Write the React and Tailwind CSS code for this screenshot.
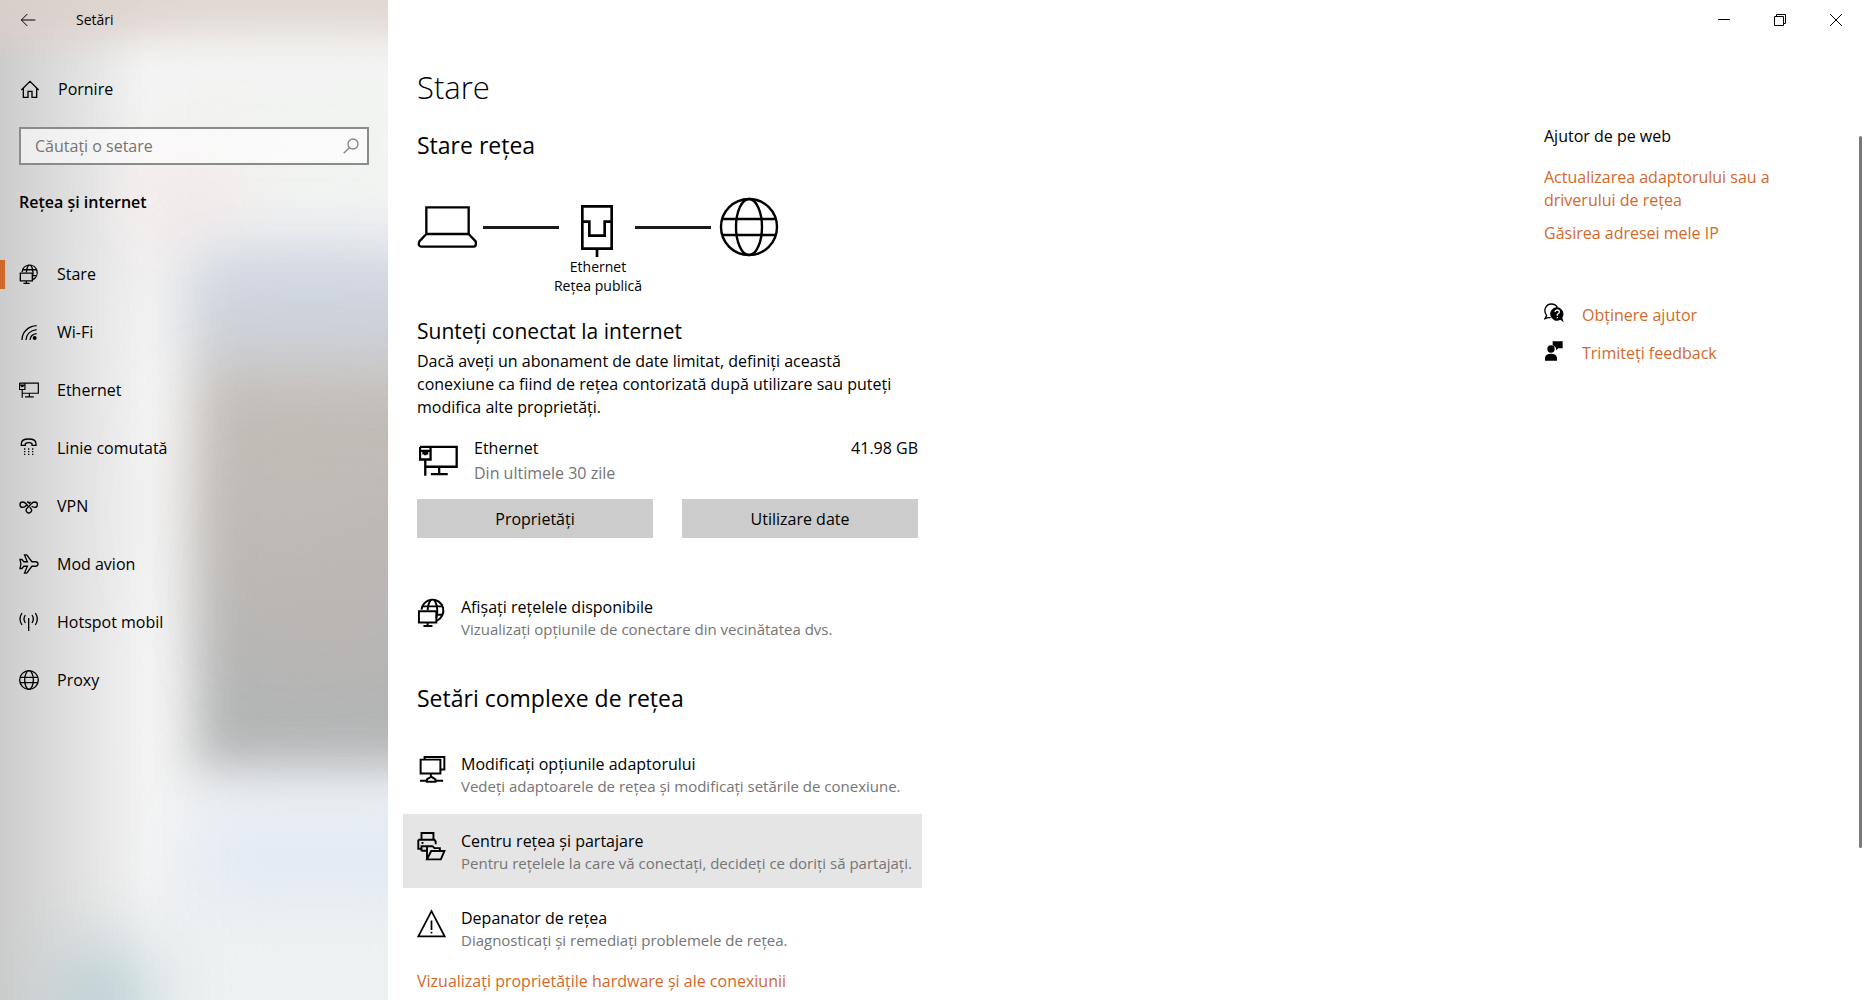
import React from "react";

function Icon({ box, className, stroke = 4, children }) {
  return (
    <svg
      viewBox={box}
      className={className}
      fill="none"
      stroke="currentColor"
      strokeWidth={stroke}
      aria-hidden="true"
    >
      {children}
    </svg>
  );
}

const NetworkStatusIcon = ({ className, stroke = 6 }) => (
  <Icon box="0 0 86 90" className={className} stroke={stroke}>
    <path d="M12 36A34 34 0 1 1 60 70" />
    <path d="M31 38Q32 16 42 4M50 4Q60 16 61 38Q61 54 58 62" />
    <path d="M15 26H77M60 52H77" />
    <path d="M4 41H58V76H4ZM31 76V87M18 87H46" />
  </Icon>
);

const WifiIcon = ({ className }) => (
  <Icon box="0 0 60 60" className={className} stroke={4}>
    <path d="M9 54C9 30 28 12 53 11M21 54C22 37 34 25 53 23M33 54C34 44 41 36 53 35" />
    <circle cx="47" cy="48" r="6" fill="currentColor" stroke="none" />
  </Icon>
);

const EthernetIcon = ({ className, stroke = 7 }) => (
  <Icon box="0 0 118 92" className={className} stroke={stroke}>
    <path d="M3 5H114V65H19M3 5V43H35V5M3 17H35M19 17V30M10 24H28M19 43V92M61 65V87M36 87H87" />
  </Icon>
);

const PhoneIcon = ({ className }) => (
  <Icon box="0 0 60 60" className={className} stroke={4}>
    <path d="M7 17C7 5 19 3 29 3S51 5 51 17V22H39V17C35 13 23 13 19 17V22H7Z" />
    <path d="M15 33H19M27 33H31M39 33H43M15 41H19M27 41H31M39 41H43M15 49H19M27 49H31M39 49H43" />
  </Icon>
);

const VpnIcon = ({ className }) => (
  <Icon box="0 0 60 60" className={className} stroke={4}>
    <path d="M22 28Q18 34 11 34A8 8 0 0 1 11 18Q17 18 22 24L27 31M24 18H27L31 22L35 18" />
    <path d="M38 31Q42 34 47 34A8 8 0 0 0 47 18Q41 18 36 24L24 37A8 8 0 1 0 36 38L32 33" />
  </Icon>
);

const PlaneIcon = ({ className }) => (
  <Icon box="0 0 62 62" className={className} stroke={4}>
    <path d="M3 17H9L15 24H26L17 3H24L40 24H52Q59 25 59 31T52 38H40L24 59H17L26 38H15L9 45H3L6 31Z" />
  </Icon>
);

const HotspotIcon = ({ className }) => (
  <Icon box="0 0 60 60" className={className} stroke={4}>
    <path d="M29 18V57M9 3Q-3 21 9 39M49 3Q61 21 49 39M19 9Q11 21 19 33M39 9Q47 21 39 33" />
  </Icon>
);

const GlobeIcon = ({ className, stroke = 4 }) => (
  <Icon box="0 0 60 60" className={className} stroke={stroke}>
    <circle cx="30" cy="30" r="28" />
    <ellipse cx="30" cy="30" rx="13" ry="28" />
    <path d="M3 22H57M3 38H57" />
  </Icon>
);

const AdaptersIcon = ({ className }) => (
  <Icon box="0 0 84 88" className={className} stroke={6}>
    <path d="M9 14H69V56H9ZM21 14V6H81V44H69M40 56V66M7 78H28M54 78H77M28 81V74L41 66L54 74V81Z" />
  </Icon>
);

const SharingIcon = ({ className }) => (
  <Icon box="0 0 88 90" className={className} stroke={6}>
    <path d="M13 24V3H50V24M3 24H53L57 30V38M3 24V52H13M13 60V44H28M13 58H28" />
    <path d="M30 85V44H47L53 50H70V59M30 85L43 59H84L73 85Z" />
    <path d="M13 34H19" />
  </Icon>
);

const WarningIcon = ({ className }) => (
  <Icon box="0 0 84 84" className={className} stroke={5}>
    <path d="M42 6L4 79H80ZM42 33V61M42 66V71" />
  </Icon>
);

const HomeIcon = ({ className }) => (
  <Icon box="0 0 60 60" className={className} stroke={4}>
    <path d="M4 33L30 7L56 33M10 28V55H24V37H36V55H50V28" />
  </Icon>
);

const LaptopIcon = ({ className }) => (
  <Icon box="0 0 180 126" className={className} stroke={7}>
    <path d="M28 84V4H155V84ZM28 84L7 106Q2 120 12 122H171Q179 120 176 106L155 84" />
  </Icon>
);

const EthernetPortIcon = ({ className }) => (
  <Icon box="0 0 96 156" className={className} stroke={8}>
    <path d="M4 4H92V131H4ZM4 50H25V92H71V50H92M48 131V156" />
  </Icon>
);

const HelpChatIcon = ({ className }) => (
  <Icon box="0 0 60 60" className={className} stroke={4}>
    <path d="M20 44H12L3 47L8 38C-4 22 6 3 22 3C31 3 37 7 40 13" />
    <path
      d="M40 13A20 20 0 1 0 49 50L59 58L55 44A20 20 0 0 0 40 13Z"
      fill="currentColor"
      stroke="none"
    />
    <path d="M33 27Q34 21 40 21T46 27Q46 31 40 34V38M40 42V46" stroke="#fff" />
  </Icon>
);

const FeedbackIcon = ({ className }) => (
  <svg viewBox="0 0 60 60" className={className} fill="currentColor" aria-hidden="true">
    <circle cx="21" cy="24" r="11" />
    <path d="M3 59V50Q5 38 21 38T39 50V59ZM26 1H56V22H43L36 28V20L26 12Z" />
  </svg>
);

const navItems = [
  { label: "Stare", Glyph: NetworkStatusIcon, active: true },
  { label: "Wi-Fi", Glyph: WifiIcon },
  { label: "Ethernet", Glyph: EthernetIcon },
  { label: "Linie comutată", Glyph: PhoneIcon },
  { label: "VPN", Glyph: VpnIcon },
  { label: "Mod avion", Glyph: PlaneIcon },
  { label: "Hotspot mobil", Glyph: HotspotIcon },
  { label: "Proxy", Glyph: GlobeIcon },
];

const advancedItems = [
  {
    title: "Modificați opțiunile adaptorului",
    text: "Vedeți adaptoarele de rețea și modificați setările de conexiune.",
    Glyph: AdaptersIcon,
  },
  {
    title: "Centru rețea și partajare",
    text: "Pentru rețelele la care vă conectați, decideți ce doriți să partajați.",
    Glyph: SharingIcon,
    hovered: true,
  },
  {
    title: "Depanator de rețea",
    text: "Diagnosticați și remediați problemele de rețea.",
    Glyph: WarningIcon,
  },
];

function Backdrop() {
  return (
    <div
      aria-hidden="true"
      className="absolute inset-0 -z-10 overflow-hidden bg-linear-to-r from-[#cccccc] from-0% via-[#dcdcdc] via-15% to-[#f4f4f4] to-38%"
    >
      <div className="absolute -top-10 -left-10 -right-10 h-20 bg-[#dccfc8]/80 blur-lg" />
      <div className="absolute top-14 left-40 -right-10 h-44 bg-[#f1f3f1] blur-2xl" />
      <div className="absolute top-40 left-36 size-20 rounded-full bg-[#f8dcdd]/80 blur-2xl" />
      <div className="absolute top-[250px] left-[195px] -right-16 h-[525px] bg-linear-to-b from-[#dde3ee] from-0% via-[#c3bdb7] via-30% to-[#b4b6b6] to-85% blur-xl" />
      <div className="absolute top-[265px] left-[195px] -right-10 h-20 bg-[#cad3df]/80 blur-2xl" />
      <div className="absolute top-[440px] left-[225px] size-36 rounded-full bg-[#c9bdb4]/60 blur-3xl" />
      <div className="absolute top-[550px] left-[290px] size-28 rounded-full bg-[#beb1b1]/80 blur-3xl" />
      <div className="absolute top-[800px] left-48 -right-16 h-32 bg-[#e1eaf4] blur-2xl" />
      <div className="absolute top-[920px] left-48 -right-16 h-32 bg-[#ecf1f1] blur-2xl" />
      <div className="absolute -bottom-12 left-14 h-24 w-24 rounded-full bg-[#a9c6cc] blur-2xl" />
    </div>
  );
}

function Sidebar() {
  return (
    <aside className="relative isolate w-[388px] shrink-0">
      <Backdrop />
      <header className="flex h-10 items-center pl-5">
        <button type="button" aria-label="Înapoi" className="mr-10 block">
          <Icon box="0 0 48 42" className="h-3.5 w-4" stroke={3}>
            <path d="M46 21H4M22 3L4 21L22 39" />
          </Icon>
        </button>
        <span className="text-sm">Setări</span>
      </header>

      <a href="#home" className="mt-8 flex h-[34px] items-center pl-5">
        <HomeIcon className="mr-[18px] size-5" />
        Pornire
      </a>

      <div className="relative mx-[19px] mt-[21px]">
        <input
          type="search"
          aria-label="Căutați o setare"
          placeholder="Căutați o setare"
          className="block h-[38px] w-full border-2 border-[#8b8b8b] bg-white/60 pr-10 pl-3.5 outline-none placeholder:text-[#747474]"
        />
        <Icon
          box="0 0 48 48"
          className="absolute top-[11px] right-2.5 size-4 text-[#858585]"
          stroke={4}
        >
          <circle cx="30" cy="18" r="15" />
          <path d="M19 29L2 46" />
        </Icon>
      </div>

      <h2 className="mt-[25px] pl-[19px] leading-6 font-semibold">Rețea și internet</h2>

      <nav className="mt-[31px]">
        {navItems.map(({ label, Glyph, active }) => (
          <a key={label} href={"#" + label} className="flex h-[58px] items-center">
            <span className={active ? "h-[29px] w-[5px] bg-[#d2692c]" : "w-[5px]"} />
            <Glyph className="mr-[18px] ml-3.5 size-5" />
            {label}
          </a>
        ))}
      </nav>
    </aside>
  );
}

function ActionRow({ title, text, Glyph, hovered }) {
  return (
    <button
      type="button"
      className={
        "-mx-3.5 flex w-[519px] items-start px-3.5 pt-4 pb-3.5 text-left " +
        (hovered ? "bg-[#e5e5e5]" : "")
      }
    >
      <Glyph className="mt-0.5 mr-[15px] size-[29px] shrink-0" />
      <span className="whitespace-nowrap">
        <span className="block leading-[22px]">{title}</span>
        <span className="block text-[15px] leading-[22px] text-[#757575]">{text}</span>
      </span>
    </button>
  );
}

function WindowControls() {
  return (
    <div className="flex h-[39px] justify-end">
      <button type="button" aria-label="Minimizare" className="grid w-14 place-items-center">
        <Icon box="0 0 12 12" className="size-3" stroke={1}>
          <path d="M0 5.5H12" />
        </Icon>
      </button>
      <button type="button" aria-label="Restaurare" className="grid w-14 place-items-center">
        <Icon box="0 0 12 12" className="size-3" stroke={1}>
          <path d="M.5 2.500H9.500V11.500H.5ZM2.500 2.500V.5H11.500V9.500H9.500" />
        </Icon>
      </button>
      <button type="button" aria-label="Închidere" className="grid w-14 place-items-center">
        <Icon box="0 0 12 12" className="size-3" stroke={1}>
          <path d="M0 0L12 12M12 0L0 12" />
        </Icon>
      </button>
    </div>
  );
}

function NetworkDiagram() {
  return (
    <figure className="mt-8 w-[362px]">
      <div className="flex h-16 items-center pt-1">
        <LaptopIcon className="h-[42px] w-[60px]" />
        <span className="ml-1.5 h-[3px] w-[76px] bg-[#1a1a1a]" />
        <span className="flex w-[76px] justify-center self-end">
          <EthernetPortIcon className="h-[52px] w-8" />
        </span>
        <span className="mr-2 h-[3px] w-[76px] bg-[#1a1a1a]" />
        <GlobeIcon className="size-[60px]" stroke={2.4} />
      </div>
      <figcaption className="text-center text-sm leading-[19px]">
        Ethernet
        <br />
        Rețea publică
      </figcaption>
    </figure>
  );
}

function Status() {
  return (
    <main className="w-[501px]">
      <h1 className="mt-7 text-[31px] leading-10 font-light">Stare</h1>
      <h2 className="mt-[22px] text-[23px] leading-8">Stare rețea</h2>
      <NetworkDiagram />

      <h3 className="mt-[21px] text-[21px] leading-[30px]">Sunteți conectat la internet</h3>
      <p className="mt-1 leading-[23px]">
        Dacă aveți un abonament de date limitat, definiți această
        <br />
        conexiune ca fiind de rețea contorizată după utilizare sau puteți
        <br />
        modifica alte proprietăți.
      </p>

      <div className="mt-[17px] flex leading-[25px]">
        <EthernetIcon className="mt-[9px] mr-4 ml-0.5 h-[31px] w-[39px]" />
        <div>
          <div>Ethernet</div>
          <div className="text-[#757575]">Din ultimele 30 zile</div>
        </div>
        <div className="ml-auto">41.98 GB</div>
      </div>
      <div className="mt-[13px] flex gap-[29px]">
        <button type="button" className="h-[39px] flex-1 bg-[#cccccc]">
          Proprietăți
        </button>
        <button type="button" className="h-[39px] flex-1 bg-[#cccccc]">
          Utilizare date
        </button>
      </div>

      <div className="mt-[42px]">
        <ActionRow
          title="Afișați rețelele disponibile"
          text="Vizualizați opțiunile de conectare din vecinătatea dvs."
          Glyph={NetworkStatusIcon}
        />
      </div>

      <h2 className="mt-7 text-[23px] leading-8">Setări complexe de rețea</h2>
      <div className="mt-[23px] flex flex-col gap-[3px]">
        {advancedItems.map((item) => (
          <ActionRow key={item.title} {...item} />
        ))}
      </div>
      <a href="#hardware" className="mt-1 block leading-6 text-[#d2692c]">
        Vizualizați proprietățile hardware și ale conexiunii
      </a>
    </main>
  );
}

function Help() {
  return (
    <aside className="mt-[85px] w-[315px] shrink-0 leading-6">
      <h2>Ajutor de pe web</h2>
      <div className="mt-[18px] flex flex-col gap-2.5 leading-[23px] text-[#d2692c]">
        <a href="#driver">
          Actualizarea adaptorului sau a
          <br />
          driverului de rețea
        </a>
        <a href="#ip">Găsirea adresei mele IP</a>
      </div>
      <div className="mt-[58px] flex flex-col gap-3.5 text-[#d2692c]">
        <a href="#help" className="flex">
          <HelpChatIcon className="mr-[18px] size-5 text-black" />
          Obținere ajutor
        </a>
        <a href="#feedback" className="flex">
          <FeedbackIcon className="mr-[18px] size-5 text-black" />
          Trimiteți feedback
        </a>
      </div>
    </aside>
  );
}

export default function App() {
  return (
    <div className="flex min-h-screen bg-white font-['Segoe_UI','Open_Sans',sans-serif] text-base text-black">
      <Sidebar />
      <div className="flex flex-1 flex-col">
        <WindowControls />
        <div className="flex flex-1 justify-between pl-[29px]">
          <Status />
          <div className="flex">
            <Help />
            <div aria-hidden="true" className="mt-[97px] mr-[2px] h-[712px] w-[3px] rounded-full bg-[#7a7a7a]" />
          </div>
        </div>
      </div>
    </div>
  );
}
